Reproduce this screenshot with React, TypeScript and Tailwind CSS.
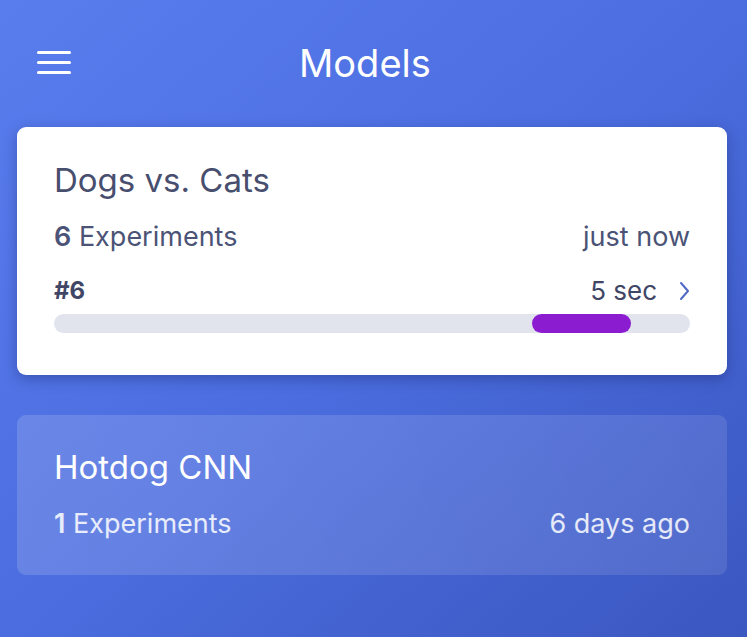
import React from "react";

export default function App() {
  return (
    <div
      className="w-[747px] h-[637px] overflow-hidden bg-gradient-to-br from-[#5a7dee] via-[#4b6ddf] to-[#3b57c0]"
      style={{ fontFamily: "Inter, 'Noto Sans', sans-serif" }}
    >
      <header className="h-[125px] flex items-center pl-[37px]">
        <button className="flex flex-col gap-[7px] w-[34px]">
          <span className="block h-[3px] w-[34px] bg-white rounded-sm" />
          <span className="block h-[3px] w-[34px] bg-white rounded-sm" />
          <span className="block h-[3px] w-[34px] bg-white rounded-sm" />
        </button>
        <h1 className="ml-[228px] text-white text-[38px] font-normal leading-none">Models</h1>
      </header>

      <div className="pl-[17px] pr-[20px] pt-[2px] flex flex-col gap-[40px]">
        <div className="h-[248px] bg-white rounded-[9px] shadow-[0_4px_14px_rgba(20,30,90,0.35)] px-[37px] pt-[33px]">
          <div className="text-[33px] leading-[40px] text-[#474e6e]">Dogs vs. Cats</div>
          <div className="mt-[21px] flex justify-between items-center text-[27px] leading-[32px] text-[#4b5376]">
            <span>
              <span className="font-semibold">6</span> Experiments
            </span>
            <span>just now</span>
          </div>
          <div className="mt-[24px] flex justify-between items-center text-[26px] leading-[28px] text-[#3f4666]">
            <span className="font-bold text-[24px]">#6</span>
            <span className="flex items-center gap-[22px]">
              <span>5 sec</span>
              <svg width="11" height="20" viewBox="0 0 11 20" fill="none">
                <path d="M2 2 L9 10 L2 18" stroke="#5068c6" strokeWidth="2" strokeLinecap="round" strokeLinejoin="round" />
              </svg>
            </span>
          </div>
          <div className="mt-[9px] h-[19px] rounded-full bg-[#e1e4ec] flex">
            <div className="ml-[478px] w-[99px] h-full rounded-full bg-[#8b1ccf]" />
          </div>
        </div>

        <div className="h-[160px] rounded-[9px] bg-gradient-to-r from-white/15 to-white/10 px-[37px] pt-[32px]">
          <div className="text-[33px] leading-[40px] text-white">Hotdog CNN</div>
          <div className="mt-[21px] flex justify-between items-center text-[27px] leading-[32px] text-white/85">
            <span>
              <span className="font-semibold">1</span> Experiments
            </span>
            <span>6 days ago</span>
          </div>
        </div>
      </div>
    </div>
  );
}
